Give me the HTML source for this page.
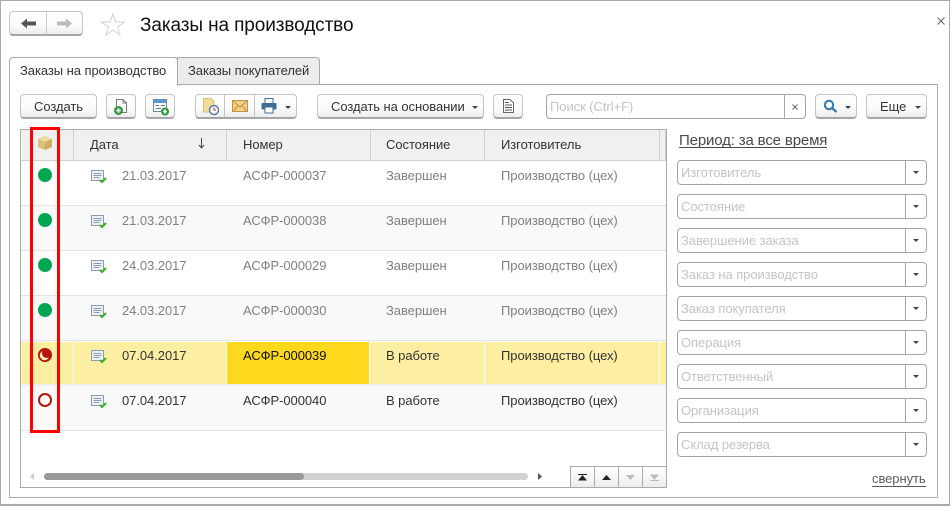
<!DOCTYPE html>
<html><head><meta charset="utf-8">
<style>
html,body{margin:0;padding:0;background:#fff}
#p{position:relative;width:950px;height:506px;overflow:hidden;background:#fff;font:13px "Liberation Sans",sans-serif;letter-spacing:-.06px;color:#333}
#p div,#p span.a,#p svg{position:absolute;box-sizing:border-box}
.t{white-space:nowrap;line-height:14px}
.btn{background:linear-gradient(#fff 0%,#fbfbfb 60%,#ededed 100%);border:1px solid #c4c4c4;border-bottom:2px solid #a6a6a6;border-radius:4px}
.f{left:677px;width:250px;height:25px;border:1px solid #a5a5a5;border-radius:4px;background:#fff}
.f i{position:absolute;left:227px;top:0;width:1px;height:23px;background:#a5a5a5}
.f b{position:absolute;left:235px;top:10px;width:0;height:0;border:3px solid transparent;border-top:3px solid #444;border-bottom:0}
.f span{position:absolute;left:3px;top:5px;color:#c4c4c4;line-height:14px;white-space:nowrap}
.arr{width:0;height:0;border:3px solid transparent;border-top:3px solid #444;border-bottom:0}
.hd{top:130px;height:30px;background:#f0f0f0;border-right:1px solid #d2d2d2}
.g{color:#808080}
.k{color:#333}
</style></head><body>
<div id="p">
<!-- window frame -->
<div style="left:0;top:0;width:950px;height:506px;border:1px solid #aaa;border-bottom:2px solid #aaa"></div>
<!-- nav -->
<div class="btn" style="left:9px;top:11px;width:74px;height:25px"></div>
<div style="left:46px;top:12px;width:1px;height:22px;background:#ccc"></div>
<svg style="left:21px;top:18px" width="15" height="11"><path d="M0 5.500L6 .5V3.500H15V7.500H6V10.500Z" fill="#555"/></svg>
<svg style="left:57px;top:18px" width="15" height="11"><path d="M15 5.500L9 .5V3.500H0V7.500H9V10.500Z" fill="#bbb"/></svg>
<svg style="left:100px;top:12px" width="26" height="25"><path d="M13 2L16 10L24.500 10L17.500 15L20 23L13 18L6 23L8.500 15L1.500 10L10 10Z" fill="#fff" stroke="#d2d2d2"/></svg>
<div class="t" style="left:140px;top:15px;font-size:19px;line-height:22px;letter-spacing:-.1px;color:#111">Заказы на производство</div>
<svg style="left:936px;top:16px" width="10" height="10"><path d="M1.500 1.500L8.500 8.500M8.500 1.500L1.500 8.500" stroke="#666" stroke-width="1"/></svg>
<!-- panel -->
<div style="left:9px;top:84px;width:929px;height:414px;border:1px solid #aaa"></div>
<div style="left:9px;top:57px;width:169px;height:29px;background:#fff;border:1px solid #aaa;border-bottom:0;border-radius:4px 4px 0 0"></div>
<div style="left:177px;top:57px;width:143px;height:28px;background:#ececec;border:1px solid #aaa;border-radius:0 4px 0 0"></div>
<div class="t" style="left:20px;top:64px">Заказы на производство</div>
<div class="t" style="left:188px;top:64px">Заказы покупателей</div>
<!-- toolbar -->
<div class="btn" style="left:20px;top:94px;width:77px;height:25px"></div>
<div class="t" style="left:34px;top:100px">Создать</div>
<div class="btn" style="left:106px;top:94px;width:30px;height:25px"></div>
<svg style="left:113px;top:98px" width="16" height="18"><path d="M3.500 1.500H10L13.500 5V14.500H3.500Z" fill="#fff" stroke="#777"/><path d="M10 1.500V5H13.500" fill="none" stroke="#777"/><circle cx="5.500" cy="12.500" r="4.500" fill="#2a9a3c"/><path d="M3 12.500H8M5.500 10V15" stroke="#fff" stroke-width="1.500"/></svg>
<div class="btn" style="left:145px;top:94px;width:30px;height:25px"></div>
<svg style="left:152px;top:98px" width="18" height="18"><rect x="1.500" y="1.500" width="13" height="12" fill="#fff" stroke="#6b8aa8"/><rect x="2" y="2" width="12" height="3" fill="#5b9bd5"/><path d="M3.500 7.500H7M9 7.500H13M3.500 10.500H9" stroke="#777"/><circle cx="13" cy="13.500" r="4" fill="#2a9a3c"/><path d="M11 13.500H15M13 11.500V15.500" stroke="#fff" stroke-width="1.500"/></svg>
<div class="btn" style="left:195px;top:94px;width:102px;height:25px"></div>
<div style="left:224px;top:95px;width:1px;height:22px;background:#c4c4c4"></div>
<div style="left:254px;top:95px;width:1px;height:22px;background:#c4c4c4"></div>
<svg style="left:202px;top:97px" width="18" height="19"><path d="M1.500 1.500H9L12 4.500V15H1.500Z" fill="#f0dc96" stroke="#d8bd6b"/><circle cx="12" cy="13" r="4.500" fill="#fff" stroke="#5a7fa8" stroke-width="1.500"/><path d="M12 10.500V13H14" stroke="#c33" fill="none"/></svg>
<svg style="left:232px;top:100px" width="16" height="13"><rect x=".5" y=".5" width="15" height="11" fill="#f2cf8b" stroke="#c9923e"/><path d="M1 1L8 7L15 1M1 11.500L6 5.500M15 11.500L10 5.500" fill="none" stroke="#c9923e"/></svg>
<svg style="left:261px;top:98px" width="16" height="16"><rect x="4" y=".5" width="8" height="5" fill="#fff" stroke="#3f6c94"/><rect x=".5" y="5" width="15" height="6.500" rx="1" fill="#3f6c94"/><rect x="4" y="9" width="8" height="6" fill="#fff" stroke="#3f6c94"/></svg>
<div class="arr" style="left:285px;top:106px"></div>
<div class="btn" style="left:317px;top:94px;width:167px;height:25px"></div>
<div class="t" style="left:331px;top:100px">Создать на основании</div>
<div class="arr" style="left:472px;top:106px"></div>
<div class="btn" style="left:493px;top:94px;width:30px;height:25px"></div>
<svg style="left:502px;top:99px" width="13" height="14"><path d="M1.500 .5H8L11.500 4V13.500H1.500Z" fill="#fff" stroke="#666"/><path d="M3 3.500H7M3 6H10M3 8.500H10M3 11H10" stroke="#555"/></svg>
<div style="left:546px;top:94px;width:260px;height:25px;border:1px solid #a5a5a5;border-radius:4px;background:#fff"></div>
<div style="left:784px;top:94px;width:1px;height:25px;background:#a5a5a5"></div>
<div class="t" style="left:550px;top:100px;color:#c4c4c4">Поиск (Ctrl+F)</div>
<svg style="left:791px;top:103px" width="8" height="8"><path d="M1.500 1.500L6.500 6.500M6.500 1.500L1.500 6.500" stroke="#666" stroke-width="1"/></svg>
<div class="btn" style="left:815px;top:94px;width:42px;height:25px"></div>
<svg style="left:823px;top:99px" width="15" height="15"><circle cx="6" cy="6" r="4.200" fill="none" stroke="#2f7ab0" stroke-width="2"/><path d="M9 9L13.500 13" stroke="#2f7ab0" stroke-width="2.200"/></svg>
<div class="arr" style="left:845px;top:106px"></div>
<div class="btn" style="left:866px;top:94px;width:61px;height:25px"></div>
<div class="t" style="left:880px;top:100px">Еще</div>
<div class="arr" style="left:915px;top:106px"></div>
<!-- grid -->
<div style="left:20px;top:129px;width:647px;height:359px;border:1px solid #aaa;background:#fff"></div>
<div class="hd" style="left:22px;width:52px"></div>
<div class="hd" style="left:74px;width:153px"></div>
<div class="hd" style="left:227px;width:144px"></div>
<div class="hd" style="left:371px;width:114px"></div>
<div class="hd" style="left:485px;width:175px"></div>
<div class="hd" style="left:660px;width:6px"></div>
<div style="left:21px;top:160px;width:645px;height:1px;background:#d2d2d2"></div>
<svg style="left:38px;top:136px" width="14" height="14"><path d="M0 3L7 0L14 3V11L7 14L0 11Z" fill="#dcbf77"/><path d="M0 3L7 6L14 3L7 0Z" fill="#eedb9f"/><path d="M7 6V14L14 11V3Z" fill="#cfae62"/></svg>
<div class="t" style="left:90px;top:138px">Дата</div>
<svg style="left:197px;top:137px" width="8" height="12"><path d="M4.500 1V10.500M2 8L4.500 11L7 8" fill="none" stroke="#444"/></svg>
<div class="t" style="left:243px;top:138px">Номер</div>
<div class="t" style="left:386px;top:138px">Состояние</div>
<div class="t" style="left:501px;top:138px">Изготовитель</div>
<!-- rows backgrounds -->
<div style="left:21px;top:206px;width:645px;height:44px;background:#f9f9f9"></div>
<div style="left:21px;top:296px;width:645px;height:44px;background:#f9f9f9"></div>
<div style="left:21px;top:386px;width:645px;height:44px;background:#f9f9f9"></div>
<div style="left:21px;top:205px;width:645px;height:1px;background:#e3e3e3"></div>
<div style="left:21px;top:250px;width:645px;height:1px;background:#e3e3e3"></div>
<div style="left:21px;top:295px;width:645px;height:1px;background:#e3e3e3"></div>
<div style="left:21px;top:340px;width:645px;height:1px;background:#e3e3e3"></div>
<div style="left:21px;top:430px;width:645px;height:1px;background:#e3e3e3"></div>
<!-- selected row -->
<div style="left:21px;top:342px;width:645px;height:42px;background:#fcefa1"></div>
<div style="left:21px;top:384px;width:645px;height:2px;background:#f0f0f0"></div>
<div style="left:227px;top:342px;width:142px;height:42px;background:#fcd91c"></div>
<div style="left:73px;top:342px;width:1px;height:42px;background:#fff"></div>
<div style="left:226px;top:342px;width:1px;height:42px;background:#fff"></div>
<div style="left:369px;top:342px;width:1px;height:42px;background:#fff"></div>
<div style="left:484px;top:342px;width:1px;height:42px;background:#fff"></div>
<div style="left:659px;top:342px;width:1px;height:42px;background:#fff"></div>
<!-- status -->
<div style="left:38px;top:168px;width:14px;height:14px;border-radius:50%;background:#00a651"></div>
<div style="left:38px;top:213px;width:14px;height:14px;border-radius:50%;background:#00a651"></div>
<div style="left:38px;top:258px;width:14px;height:14px;border-radius:50%;background:#00a651"></div>
<div style="left:38px;top:303px;width:14px;height:14px;border-radius:50%;background:#00a651"></div>
<svg style="left:38px;top:348px" width="14" height="14"><circle cx="7" cy="7" r="7" fill="#b8140c"/><circle cx="6.600" cy="7.400" r="4.800" fill="#fff2b8"/><circle cx="8.700" cy="5.300" r="4.700" fill="#b8140c"/></svg>
<div style="left:38px;top:393px;width:14px;height:14px;border-radius:50%;border:2px solid #b8140c;background:#fff"></div>
<!-- doc icons -->
<svg style="left:91px;top:170px" width="17" height="14"><rect x=".5" y=".5" width="12" height="10" fill="#eef2f6" stroke="#8a9bb0"/><path d="M2.500 3.500H10.500M2.500 5.500H10.500M2.500 7.500H8.500" stroke="#8a9bb0"/><path d="M9 10L11 12L15 8" fill="none" stroke="#3fb02e" stroke-width="2.200"/></svg>
<svg style="left:91px;top:215px" width="17" height="14"><rect x=".5" y=".5" width="12" height="10" fill="#eef2f6" stroke="#8a9bb0"/><path d="M2.500 3.500H10.500M2.500 5.500H10.500M2.500 7.500H8.500" stroke="#8a9bb0"/><path d="M9 10L11 12L15 8" fill="none" stroke="#3fb02e" stroke-width="2.200"/></svg>
<svg style="left:91px;top:260px" width="17" height="14"><rect x=".5" y=".5" width="12" height="10" fill="#eef2f6" stroke="#8a9bb0"/><path d="M2.500 3.500H10.500M2.500 5.500H10.500M2.500 7.500H8.500" stroke="#8a9bb0"/><path d="M9 10L11 12L15 8" fill="none" stroke="#3fb02e" stroke-width="2.200"/></svg>
<svg style="left:91px;top:305px" width="17" height="14"><rect x=".5" y=".5" width="12" height="10" fill="#eef2f6" stroke="#8a9bb0"/><path d="M2.500 3.500H10.500M2.500 5.500H10.500M2.500 7.500H8.500" stroke="#8a9bb0"/><path d="M9 10L11 12L15 8" fill="none" stroke="#3fb02e" stroke-width="2.200"/></svg>
<svg style="left:91px;top:350px" width="17" height="14"><rect x=".5" y=".5" width="12" height="10" fill="#eef2f6" stroke="#8a9bb0"/><path d="M2.500 3.500H10.500M2.500 5.500H10.500M2.500 7.500H8.500" stroke="#8a9bb0"/><path d="M9 10L11 12L15 8" fill="none" stroke="#3fb02e" stroke-width="2.200"/></svg>
<svg style="left:91px;top:395px" width="17" height="14"><rect x=".5" y=".5" width="12" height="10" fill="#eef2f6" stroke="#8a9bb0"/><path d="M2.500 3.500H10.500M2.500 5.500H10.500M2.500 7.500H8.500" stroke="#8a9bb0"/><path d="M9 10L11 12L15 8" fill="none" stroke="#3fb02e" stroke-width="2.200"/></svg>
<!-- row text -->
<div class="t g" style="left:122px;top:169px">21.03.2017</div><div class="t g" style="left:243px;top:169px">АСФР-000037</div><div class="t g" style="left:386px;top:169px">Завершен</div><div class="t g" style="left:501px;top:169px">Производство (цех)</div>
<div class="t g" style="left:122px;top:214px">21.03.2017</div><div class="t g" style="left:243px;top:214px">АСФР-000038</div><div class="t g" style="left:386px;top:214px">Завершен</div><div class="t g" style="left:501px;top:214px">Производство (цех)</div>
<div class="t g" style="left:122px;top:259px">24.03.2017</div><div class="t g" style="left:243px;top:259px">АСФР-000029</div><div class="t g" style="left:386px;top:259px">Завершен</div><div class="t g" style="left:501px;top:259px">Производство (цех)</div>
<div class="t g" style="left:122px;top:304px">24.03.2017</div><div class="t g" style="left:243px;top:304px">АСФР-000030</div><div class="t g" style="left:386px;top:304px">Завершен</div><div class="t g" style="left:501px;top:304px">Производство (цех)</div>
<div class="t k" style="left:122px;top:349px">07.04.2017</div><div class="t k" style="left:243px;top:349px;color:#111">АСФР-000039</div><div class="t k" style="left:386px;top:349px">В работе</div><div class="t k" style="left:501px;top:349px">Производство (цех)</div>
<div class="t k" style="left:122px;top:394px">07.04.2017</div><div class="t k" style="left:243px;top:394px">АСФР-000040</div><div class="t k" style="left:386px;top:394px">В работе</div><div class="t k" style="left:501px;top:394px">Производство (цех)</div>
<!-- red rect -->
<div style="left:30px;top:127px;width:30px;height:306px;border:3px solid #f00"></div>
<!-- scrollbar -->
<svg style="left:30px;top:473px" width="5" height="7"><path d="M4 0V7L0 3.500Z" fill="#ccc"/></svg>
<div style="left:44px;top:473px;width:484px;height:7px;border-radius:4px;background:#d2d2d2"></div>
<div style="left:44px;top:473px;width:260px;height:7px;border-radius:4px;background:#999"></div>
<svg style="left:538px;top:473px" width="5" height="7"><path d="M0 0V7L4 3.500Z" fill="#555"/></svg>
<!-- pager -->
<div style="left:570px;top:466px;width:97px;height:22px;border:1px solid #aaa;background:linear-gradient(#fff,#ededed)"></div>
<div style="left:594px;top:466px;width:1px;height:22px;background:#aaa"></div>
<div style="left:618px;top:466px;width:1px;height:22px;background:#aaa"></div>
<div style="left:642px;top:466px;width:1px;height:22px;background:#aaa"></div>
<svg style="left:578px;top:474px" width="9" height="7"><path d="M0 .5H9" stroke="#222"/><path d="M4.500 1L9 6.500H0Z" fill="#222"/></svg>
<svg style="left:602px;top:475px" width="9" height="5"><path d="M4.500 0L9 5H0Z" fill="#222"/></svg>
<svg style="left:626px;top:475px" width="9" height="5"><path d="M4.500 5L9 0H0Z" fill="#bbb"/></svg>
<svg style="left:650px;top:474px" width="9" height="7"><path d="M0 6.500H9" stroke="#bbb"/><path d="M4.500 6L9 .5H0Z" fill="#bbb"/></svg>
<!-- filter panel -->
<div class="t" style="left:679px;top:133px;font-size:15px;line-height:16px;color:#4a4a4a;border-bottom:1px solid #4a4a4a;letter-spacing:-.15px;height:15px">Период: за все время</div>
<div class="f" style="top:160px"><i></i><b></b><span>Изготовитель</span></div>
<div class="f" style="top:194px"><i></i><b></b><span>Состояние</span></div>
<div class="f" style="top:228px"><i></i><b></b><span>Завершение заказа</span></div>
<div class="f" style="top:262px"><i></i><b></b><span>Заказ на производство</span></div>
<div class="f" style="top:296px"><i></i><b></b><span>Заказ покупателя</span></div>
<div class="f" style="top:330px"><i></i><b></b><span>Операция</span></div>
<div class="f" style="top:364px"><i></i><b></b><span>Ответственный</span></div>
<div class="f" style="top:398px"><i></i><b></b><span>Организация</span></div>
<div class="f" style="top:432px"><i></i><b></b><span>Склад резерва</span></div>
<div class="t" style="left:872px;top:472px;color:#5a5a5a;border-bottom:1px solid #5a5a5a;height:15px">свернуть</div>
</div>
</body></html>
